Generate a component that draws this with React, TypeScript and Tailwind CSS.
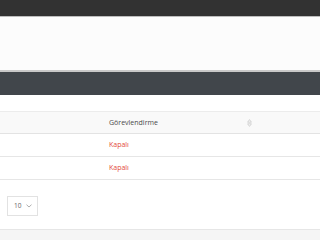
import React from 'react';

const rows = ['Kapalı', 'Kapalı'];

function SortIcon() {
  return (
    <svg width="5" height="8" viewBox="0 0 5 8" className="text-[#c4c4c4]">
      <path d="M2.5 0.6 L4.4 3.2 H0.6 Z" fill="none" stroke="currentColor" strokeWidth="0.7" />
      <path d="M2.5 7.4 L4.4 4.8 H0.6 Z" fill="none" stroke="currentColor" strokeWidth="0.7" />
    </svg>
  );
}

export default function App() {
  return (
    <div className="w-[320px] h-[240px] overflow-hidden bg-white flex flex-col" style={{ fontFamily: '"Open Sans", "Liberation Sans", sans-serif' }}>
      {/* top nav */}
      <div className="h-[16px] bg-[#323232] shrink-0" />
      <div className="h-[56px] bg-[#fcfcfc] border-t border-[#bdbdbd] border-b-2 border-b-[#c9c9c9] shrink-0" />

      {/* card header */}
      <div className="h-[23px] bg-[#41464b] shrink-0" />
      <div className="h-[17px] bg-white border-b border-[#ececec] shrink-0" />

      {/* table */}
      <div className="flex flex-col text-[7px]">
        <div className="h-[22px] flex items-center bg-[#f9f9f9] border-b border-[#e3e3e3] pt-[1px]">
          <div className="w-[109px]" />
          <div className="w-[138px] text-[#4a4a4a]">Görevlendirme</div>
          <SortIcon />
        </div>
        {rows.map((r, i) => (
          <div key={i} className="h-[23px] flex items-center border-b border-[#e6e6e6] pt-[1px]">
            <div className="w-[109px]" />
            <div className="text-[#e34a3a]">{r}</div>
          </div>
        ))}
      </div>

      {/* footer */}
      <div className="h-[49px] flex items-center px-[7px] pt-[3px] shrink-0">
        <div className="w-[31px] h-[20px] border border-[#e2e2e2] flex items-center gap-[5px] pl-[6px] text-[6.5px] text-[#666]">
          <span>10</span>
          <svg width="6" height="4" viewBox="0 0 6 4">
            <path d="M0.5 0.7 L3 3 L5.5 0.7" fill="none" stroke="#999" strokeWidth="0.8" />
          </svg>
        </div>
      </div>
      <div className="flex-1 bg-[#f5f5f5] border-t border-[#e6e6e6]" />
    </div>
  );
}
